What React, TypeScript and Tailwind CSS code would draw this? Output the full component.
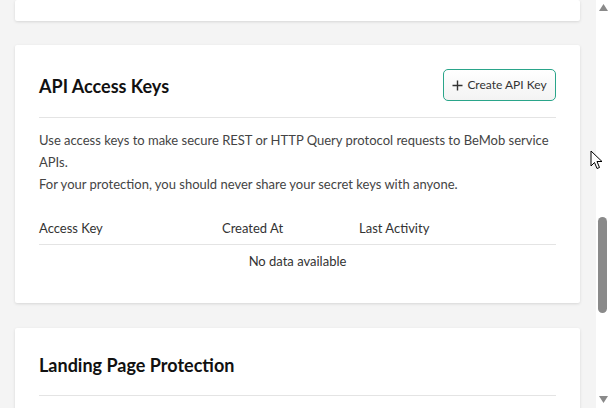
import React from "react";

function Card({ children, className = "" }: { children: React.ReactNode; className?: string }) {
  return (
    <div className={"bg-white rounded-[2px] shadow-[0_1px_3px_rgba(0,0,0,0.12)] " + className}>{children}</div>
  );
}

export default function App() {
  return (
    <div className="w-[610px] h-[408px] overflow-hidden flex relative" style={{ fontFamily: "Lato, 'Open Sans', sans-serif" }}>
      <div className="flex-1 bg-[#f4f4f4] pl-[15px] pr-[16px] flex flex-col">
        <Card className="h-[21px] shrink-0"><div /></Card>
        <Card className="mt-[24px] shrink-0 px-[24px] pt-[24px] pb-[24px]">
          <div className="flex items-center justify-between h-[32px]">
            <h2 className="text-[18px] font-bold text-[#111] leading-[27px] mt-[2px]">API Access Keys</h2>
            <button className="h-[32px] w-[113px] flex items-center justify-center gap-[4px] rounded-[5px] border border-[#2aa58a] bg-gradient-to-b from-white to-[#f3f3f3] text-[12px] text-[#333]">
              <svg width="11" height="11" viewBox="0 0 11 11" className="shrink-0">
                <path d="M5.5 0.5v10M0.5 5.5h10" stroke="#333" strokeWidth="1.4" />
              </svg>
              <span>Create API Key</span>
            </button>
          </div>
          <div className="mt-[16px] border-t border-[#e4e4e4]" />
          <p className="mt-[11px] text-[13px] leading-[22px] text-[#444]">
            Use access keys to make secure REST or HTTP Query protocol requests to BeMob service APIs.
            <br />
            For your protection, you should never share your secret keys with anyone.
          </p>
          <div className="mt-[18px] h-[32px] flex items-center text-[13px] text-[#333] border-b border-[#e4e4e4]">
            <div className="w-[183px]">Access Key</div>
            <div className="w-[137px]">Created At</div>
            <div>Last Activity</div>
          </div>
          <div className="h-[34px] flex items-center justify-center text-[13px] text-[#333]">No data available</div>
        </Card>
        <Card className="mt-[25px] shrink-0 px-[24px] pt-[24px] h-[120px]">
          <h2 className="text-[18px] font-bold text-[#111] leading-[27px]">Landing Page Protection</h2>
          <div className="mt-[16px] border-t border-[#e4e4e4]" />
        </Card>
      </div>
      <div className="w-[14px] bg-white flex flex-col items-center shrink-0 relative">
        <svg width="9" height="7" viewBox="0 0 9 7" className="mt-[4px]">
          <path d="M4.5 0L9 7H0z" fill="#8a8a8a" />
        </svg>
        <div className="absolute left-[2px] top-[217px] w-[9px] h-[96px] rounded-full bg-[#8a8a8a]" />
        <svg width="9" height="7" viewBox="0 0 9 7" className="absolute bottom-[5px] left-[2.5px]">
          <path d="M0 0H9L4.5 7z" fill="#8a8a8a" />
        </svg>
      </div>
      <svg width="13" height="20" viewBox="0 0 13 20" className="absolute left-[590px] top-[150px]">
        <path d="M1 1V16L4.5 12.5L7 18.5L9.5 17.5L7 11.5H12Z" fill="white" stroke="black" strokeWidth="1" strokeLinejoin="round" />
      </svg>
    </div>
  );
}
